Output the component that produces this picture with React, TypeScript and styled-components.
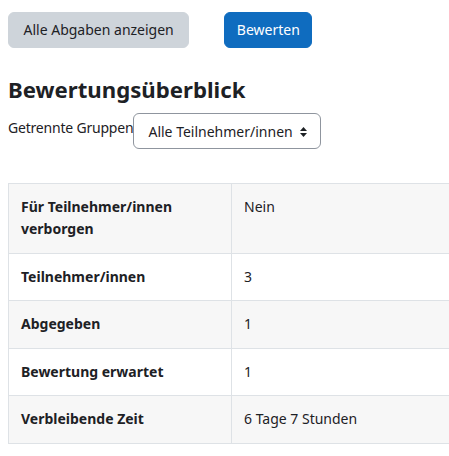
import React from "react";
import styled, { createGlobalStyle } from "styled-components";

const Global = createGlobalStyle`
  html, body { margin: 0; padding: 0; background: #fff; overflow: hidden; }
  body {
    font-family: "Noto Sans", "Open Sans", "Liberation Sans", sans-serif;
    font-size: 14px;
    line-height: 22.5px;
    color: #1d2125;
  }
`;

const Page = styled.div`
  padding: 12px 8px 0 8px;
  width: 520px;
`;

const Toolbar = styled.div`
  display: flex;
  gap: 35px;
  align-items: center;
`;

const Button = styled.button<{ $primary?: boolean }>`
  font: inherit;
  font-size: 14px;
  line-height: 22.5px;
  height: 36px;
  padding: ${(p) => (p.$primary ? "6px 11.5px" : "6px 14.5px")};
  border: 1px solid ${(p) => (p.$primary ? "#0f6cbf" : "#ced4da")};
  border-radius: 6px;
  background: ${(p) => (p.$primary ? "#0f6cbf" : "#ced4da")};
  color: ${(p) => (p.$primary ? "#fff" : "#1d2125")};
`;

const Heading = styled.h3`
  margin: 29px 0 9px 0;
  font-size: 22.2px;
  font-weight: 700;
  line-height: 1.2;
`;

const GroupRow = styled.div`
  display: flex;
  align-items: flex-start;
`;

const GroupLabel = styled.label`
  margin-top: 4px;
  letter-spacing: -0.2px;
`;

const SelectBox = styled.div`
  position: relative;
  display: inline-flex;
  align-items: flex-start;
  height: 36px;
  box-sizing: border-box;
  padding: 7px 27px 5px 14px;
  border: 1px solid #8f959e;
  border-radius: 6px;
`;

const Caret = styled.svg`
  position: absolute;
  right: 13px;
  top: 13px;
`;

const Table = styled.table`
  margin-top: 34px;
  border-collapse: collapse;
  width: 100%;
`;

const Row = styled.tr<{ $striped?: boolean }>`
  background: ${(p) => (p.$striped ? "#f7f7f7" : "#fff")};
`;

const HeadCell = styled.th`
  width: 198px;
  text-align: left;
  font-weight: 700;
  vertical-align: top;
  padding: 12px;
  line-height: 22.5px;
  border: 1px solid #dee2e6;
`;

const Cell = styled.td`
  vertical-align: top;
  padding: 12px;
  line-height: 22.5px;
  border: 1px solid #dee2e6;
`;

const rows: [string, string][] = [
  ["Für Teilnehmer/innen verborgen", "Nein"],
  ["Teilnehmer/innen", "3"],
  ["Abgegeben", "1"],
  ["Bewertung erwartet", "1"],
  ["Verbleibende Zeit", "6 Tage 7 Stunden"],
];

export default function App() {
  return (
    <Page>
      <Global />
      <Toolbar>
        <Button>Alle Abgaben anzeigen</Button>
        <Button $primary>Bewerten</Button>
      </Toolbar>
      <Heading>Bewertungsüberblick</Heading>
      <GroupRow>
        <GroupLabel>Getrennte Gruppen</GroupLabel>
        <SelectBox>
          Alle Teilnehmer/innen
          <Caret width="7" height="10" viewBox="0 0 7 10">
            <path d="M3.5 0 L7 4 H0 Z M3.5 10 L0 6 H7 Z" fill="#1d2125" />
          </Caret>
        </SelectBox>
      </GroupRow>
      <Table>
        <tbody>
          {rows.map(([k, v], i) => (
            <Row key={k} $striped={i % 2 === 0}>
              <HeadCell>{k}</HeadCell>
              <Cell>{v}</Cell>
            </Row>
          ))}
        </tbody>
      </Table>
    </Page>
  );
}
